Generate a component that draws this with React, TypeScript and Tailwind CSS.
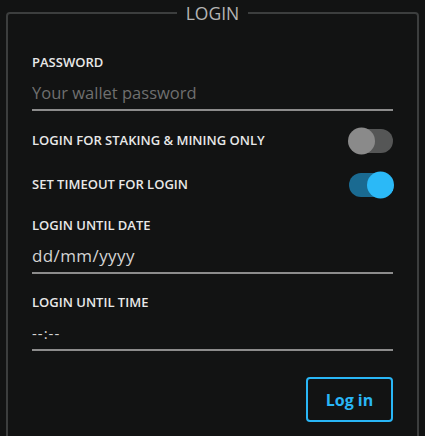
import React, { useState } from 'react';

const font = { fontFamily: '"Open Sans", "Noto Sans", sans-serif' };

const Toggle: React.FC<{ on: boolean; onChange: () => void }> = ({ on, onChange }) => (
  <button
    onClick={onChange}
    className={`relative h-[24px] w-[44px] rounded-full ${on ? 'bg-[#1a6a91]' : 'bg-[#555656]'}`}
  >
    <span
      className={`absolute top-1/2 h-[27px] w-[27px] -translate-y-1/2 rounded-full ${
        on ? 'right-[-1px] bg-[#2bb9f7]' : 'left-[-1px] bg-[#8a8a8a]'
      }`}
    />
  </button>
);

export default function App() {
  const [stakingOnly, setStakingOnly] = useState(false);
  const [timeout, setTimeoutOn] = useState(true);

  return (
    <div className="min-h-[436px] w-[425px] bg-[#121313] px-[6px]" style={font}>
      {/* Login panel */}
      <fieldset className="rounded-[4px] border-2 border-[#3c3e3e] px-6 pb-6">
        <legend className="mx-auto px-[9px] text-[17.5px] leading-[26px] text-[#b4b4b4]">LOGIN</legend>

        <div className="pt-7">
          <label className="block text-[13px] font-semibold leading-4 text-[#e8e8e8]">PASSWORD</label>
          <input
            type="password"
            placeholder="Your wallet password"
            className="mt-[6px] h-[35px] w-full border-b-2 border-[#8c8c8c] bg-transparent text-[16.5px] text-[#dcdcdc] placeholder:text-[#6f6f6f] focus:outline-none"
          />
        </div>

        <div className="mt-4 flex h-[28px] items-center justify-between">
          <span className="text-[13px] font-semibold text-[#e8e8e8]">LOGIN FOR STAKING &amp; MINING ONLY</span>
          <Toggle on={stakingOnly} onChange={() => setStakingOnly(!stakingOnly)} />
        </div>

        <div className="mt-4 flex h-[28px] items-center justify-between">
          <span className="text-[13px] font-semibold text-[#e8e8e8]">SET TIMEOUT FOR LOGIN</span>
          <Toggle on={timeout} onChange={() => setTimeoutOn(!timeout)} />
        </div>

        <div className="mt-[18px]">
          <label className="block text-[13px] font-semibold leading-4 text-[#e8e8e8]">LOGIN UNTIL DATE</label>
          <input
            type="text"
            defaultValue="dd/mm/yyyy"
            className="mt-[6px] h-[35px] w-full border-b-2 border-[#8c8c8c] bg-transparent text-[17px] tracking-[0.4px] text-[#d4d4d4] focus:outline-none"
          />
        </div>

        <div className="mt-5">
          <label className="block text-[13px] font-semibold leading-4 text-[#e8e8e8]">LOGIN UNTIL TIME</label>
          <input
            type="text"
            defaultValue="--:--"
            className="mt-[6px] h-[35px] w-full border-b-2 border-[#8c8c8c] bg-transparent text-[15px] tracking-[1px] text-[#d4d4d4] focus:outline-none"
          />
        </div>

        <div className="mt-[26px] flex justify-end">
          <button className="h-[45px] w-[87px] rounded-[4px] border-2 border-[#29b6f6] text-[16px] font-bold text-[#29b6f6]">
            Log in
          </button>
        </div>
      </fieldset>
    </div>
  );
}
